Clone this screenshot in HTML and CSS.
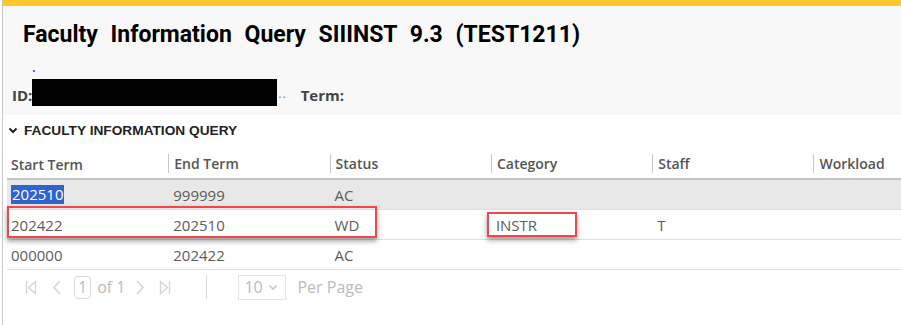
FILE: index.html
```html
<!DOCTYPE html>
<html lang="en">
<head>
    <meta charset="UTF-8">
    <title>Faculty Information Query</title>
    <link rel="stylesheet" href="styles.css">
</head>
<body>
<div class="frame">
    <div class="topbar"></div>

    <div class="header">
        <h1 class="title">Faculty Information Query SIIINST 9.3 (TEST1211)</h1>
        <div class="dot"></div>
        <div class="keyrow">
            <span class="label">ID:</span>
            <span class="redact"></span>
            <span class="dots">..</span>
            <span class="label term">Term:</span>
        </div>
    </div>

    <div class="section">
        <div class="section-title">
            <svg class="chev" width="10" height="7" viewBox="0 0 10 7"><path d="M1.5 1.5 L5 5 L8.5 1.5" fill="none" stroke="#222" stroke-width="2"/></svg>
            FACULTY INFORMATION QUERY
        </div>

        <div class="grid">
            <div class="row head">
                <div class="cell">Start Term</div>
                <div class="cell sep">End Term</div>
                <div class="cell sep">Status</div>
                <div class="cell sep">Category</div>
                <div class="cell sep">Staff</div>
                <div class="cell sep">Workload</div>
            </div>
            <div class="row sel">
                <div class="cell"><span class="hl">202510</span></div>
                <div class="cell">999999</div>
                <div class="cell">AC</div>
                <div class="cell"></div>
                <div class="cell"></div>
                <div class="cell"></div>
            </div>
            <div class="row">
                <div class="cell">202422</div>
                <div class="cell">202510</div>
                <div class="cell">WD</div>
                <div class="cell">INSTR</div>
                <div class="cell">T</div>
                <div class="cell"></div>
            </div>
            <div class="row">
                <div class="cell">000000</div>
                <div class="cell">202422</div>
                <div class="cell">AC</div>
                <div class="cell"></div>
                <div class="cell"></div>
                <div class="cell"></div>
            </div>

            <!-- annotation boxes -->
            <div class="mark mark-row"></div>
            <div class="mark mark-cat"></div>
        </div>

        <div class="pager">
            <svg class="pg first" width="12" height="15" viewBox="0 0 12 15"><path d="M1.5 1 V14 M10.5 1.5 L3.5 7.5 L10.5 13.5 Z" fill="none" stroke="#d4d4d4" stroke-width="1.3"/></svg>
            <svg class="pg prev" width="10" height="15" viewBox="0 0 10 15"><path d="M8 1 L2 7.5 L8 14" fill="none" stroke="#d4d4d4" stroke-width="1.5"/></svg>
            <span class="pagebox">1</span>
            <span class="of">of 1</span>
            <svg class="pg next" width="10" height="15" viewBox="0 0 10 15"><path d="M2 1 L8 7.5 L2 14" fill="none" stroke="#d4d4d4" stroke-width="1.5"/></svg>
            <svg class="pg last" width="12" height="15" viewBox="0 0 12 15"><path d="M1.5 1.5 L8.5 7.5 L1.5 13.5 Z M10.5 1 V14" fill="none" stroke="#d4d4d4" stroke-width="1.3"/></svg>
            <span class="pgsep"></span>
            <span class="perbox">10
                <svg width="10" height="7" viewBox="0 0 10 7"><path d="M1.5 1.5 L5 5 L8.5 1.5" fill="none" stroke="#c8c8c8" stroke-width="1.6"/></svg>
            </span>
            <span class="per">Per Page</span>
        </div>
    </div>
</div>
</body>
</html>
```

FILE: styles.css
```css
body{
    margin: 0;
    background: #fff;
    font-family: "Open Sans", "Noto Sans", sans-serif;
}
.frame{
    margin-left: 2px;
    border-left: 1px solid #c8c8c8;
    height: 325px;
}
.topbar{
    height: 6px;
    background: #ffc72c;
}
.header{
    background: #f8f8f8;
    height: 109px;
    padding-top: 16px;
    box-sizing: border-box;
}
.title{
    margin: 0 0 0 20px;
    font: bold 23px/26px Roboto, "Liberation Sans", sans-serif;
    word-spacing: 7px;
    color: #000;
}
.dot{
    width: 2px;
    height: 2px;
    background: #3a7be0;
    margin: 22px 0 0 30px;
}
.keyrow{
    display: flex;
    align-items: center;
    margin-top: 6px;
    padding-left: 9px;
    height: 28px;
}
.label{
    font: bold 15px "Open Sans", "Noto Sans", sans-serif;
    color: #444;
    margin-top: 5px;
}
.redact{
    display: inline-block;
    width: 245px;
    height: 27px;
    background: #000;
}
.dots{
    color: #3a7be0;
    font-size: 12px;
    align-self: flex-end;
    margin: 0 0 4px 1px;
    letter-spacing: 1px;
}
.term{
    margin-left: 14px;
}
.section-title{
    display: flex;
    align-items: center;
    height: 30px;
    padding-left: 5px;
    font: bold 13.7px "Liberation Sans", Arial, sans-serif;
    color: #222;
}
.chev{
    margin-right: 6px;
}
.grid{
    position: relative;
    margin-left: 4px;
    margin-top: 5px;
}
.row{
    display: grid;
    grid-template-columns: repeat(5, 161.3px) 1fr;
    height: 30px;
    border-bottom: 1px solid #e0e0e0;
    box-sizing: border-box;
}
.row.head{
    border-bottom: 2px solid #c4c4c4;
    height: 30px;
}
.row.sel{
    background: #e8e8e8;
}
.cell{
    display: flex;
    align-items: center;
    padding-left: 4px;
    font-size: 15px;
    color: #5c5c5c;
    white-space: nowrap;
}
.head .cell{
    font-size: 14px;
    font-weight: 600;
    color: #555;
}
.head .sep{
    border-left: 1px solid #c8c8c8;
    margin: 4px 0 5px;
    padding-left: 5px;
}
.row .cell + .cell{
    padding-left: 5px;
}
.hl{
    background: #3063d0;
    color: #fff;
    padding: 0 1px;
    line-height: 19px;
}
.mark{
    position: absolute;
    border: 2px solid #f04848;
    box-shadow: 0 3px 5px rgba(0,0,0,0.4);
}
.mark-row{
    left: 0;
    top: 56px;
    width: 366px;
    height: 28px;
}
.mark-cat{
    left: 480px;
    top: 62px;
    width: 86px;
    height: 21px;
}
.pager{
    display: flex;
    align-items: center;
    height: 34px;
    padding-left: 22px;
    color: #bbb;
    font-size: 16px;
}
.pg{
    flex: none;
}
.prev{
    margin-left: 15px;
}
.pagebox{
    display: inline-block;
    border: 1px solid #d8d8d8;
    border-radius: 4px;
    padding: 0 3px;
    line-height: 21px;
    margin-left: 12px;
}
.of{
    margin: 0 10px 0 6px;
}
.last{
    margin-left: 14px;
}
.pgsep{
    width: 1px;
    height: 24px;
    background: #ddd;
    margin-left: 35px;
    margin-right: 31px;
}
.perbox{
    display: inline-flex;
    align-items: center;
    gap: 5px;
    border: 1px solid #e4e4e4;
    height: 25px;
    padding: 0 5px;
    box-sizing: border-box;
    width: 48px;
}
.per{
    margin-left: 11px;
}
```
